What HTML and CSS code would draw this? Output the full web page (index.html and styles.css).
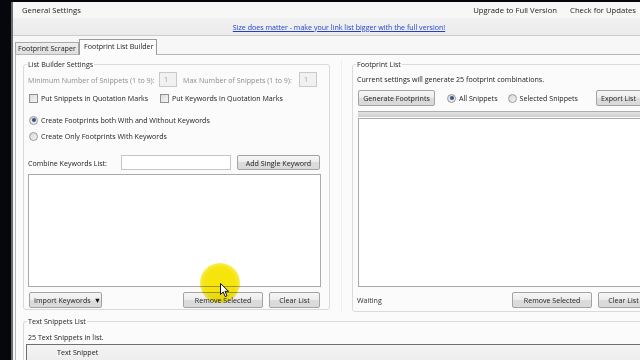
FILE: index.html
```html
<!DOCTYPE html>
<html>
<head>
<meta charset="utf-8">
<title>General Settings</title>
<link rel="stylesheet" href="styles.css">
</head>
<body>
<div class="window">
  <div class="menubar">
    <span class="menu-item">General Settings</span>
    <span class="spacer"></span>
    <span class="menu-item">Upgrade to Full Version</span>
    <span class="menu-item">Check for Updates</span>
  </div>
  <div class="banner"><a class="promo">Size does matter - make your link list bigger with the full version!</a></div>
  <div class="tabs">
    <div class="tab">Footprint Scraper</div>
    <div class="tab active">Footprint List Builder</div>
  </div>
  <div class="page">
    <div class="top">
      <fieldset class="group left">
        <legend>List Builder Settings</legend>
        <div class="row r1">
          <span class="dim lbl-min">Minimum Number of Snippets (1 to 9):</span>
          <span class="num">1</span>
          <span class="dim lbl-max">Max Number of Snippets (1 to 9):</span>
          <span class="num">1</span>
        </div>
        <div class="row r2">
          <label class="check first"><span class="box"></span>Put Snippets in Quotation Marks</label>
          <label class="check"><span class="box"></span>Put Keywords in Quotation Marks</label>
        </div>
        <div class="radios">
          <label class="radio"><span class="dot on"></span>Create Footprints both With and Without Keywords</label>
          <label class="radio"><span class="dot"></span>Create Only Footprints With Keywords</label>
        </div>
        <div class="row r5">
          <span class="lbl-combine">Combine Keywords List:</span>
          <span class="textbox"></span>
          <span class="btn w83">Add Single Keyword</span>
        </div>
        <div class="listbox"></div>
        <div class="row bottom">
          <span class="btn w73">Import Keywords <span class="tri">&#9660;</span></span>
          <span class="spacer"></span>
          <span class="btn w80">Remove Selected</span>
          <span class="btn w51">Clear List</span>
        </div>
      </fieldset>
      <div class="split"></div>
      <fieldset class="group right">
        <legend>Footprint List</legend>
        <div class="status">Current settings will generate 25 footprint combinations.</div>
        <div class="row gen">
          <span class="btn w77">Generate Footprints</span>
          <label class="radio inline"><span class="dot on"></span>All Snippets</label>
          <label class="radio inline"><span class="dot"></span>Selected Snippets</label>
          <span class="spacer"></span>
          <span class="btn w54">Export List <span class="tri">&#9660;</span></span>
        </div>
        <div class="strip"></div>
        <div class="listbox tall"></div>
        <div class="row bottom">
          <span class="waiting">Waiting</span>
          <span class="spacer"></span>
          <span class="btn w80">Remove Selected</span>
          <span class="btn w51">Clear List</span>
        </div>
      </fieldset>
    </div>
    <fieldset class="group snippets">
      <legend>Text Snippets List</legend>
      <div class="count">25 Text Snippets in list.</div>
      <div class="grid-header"><span class="col">Text Snippet</span></div>
    </fieldset>
  </div>
  <div class="highlight"></div>
  <svg class="cursor" width="11" height="15" viewBox="0 0 11 15">
    <path d="M0.5 0.5 L0.5 11.5 L3.2 9 L5.2 13.6 L7 12.8 L5 8.3 L8.6 8.3 Z" fill="#fff" stroke="#111" stroke-width="1" stroke-linejoin="round"/>
  </svg>
</div>
</body>
</html>
```

FILE: styles.css
```css
* { box-sizing: border-box; }
html, body { margin: 0; height: 100%; }
body {
  background: #06070d;
  padding: 2px 0 0 11px;
  overflow: hidden;
  font-family: "Open Sans", "Noto Sans", sans-serif;
  font-size: 7.1px;
  color: #222;
}
.window {
  position: relative;
  width: 654px;
  height: 360px;
  border-left: 2px solid #6d6d70;
  background: #f6f6f6;
}
.menubar {
  display: flex;
  align-items: center;
  height: 16px;
  padding: 0 29px 0 9px;
  background: #f7f7f7;
  font-size: 7.7px;
  color: #1c1c1c;
}
.spacer { flex: 1; }
.menu-item + .menu-item { margin-left: 13px; }
.banner {
  display: flex;
  justify-content: center;
  align-items: center;
  height: 18px;
  background: linear-gradient(#f1f1f1, #ebebeb);
  border-bottom: 1px solid #cdcdcd;
}
.promo {
  color: #1f3fcc;
  text-decoration: underline;
}
.tabs {
  display: flex;
  align-items: flex-end;
  height: 18px;
  padding-left: 2px;
  background: #f7f7f7;
}
.tab {
  height: 12px;
  width: 64px;
  border: 1px solid #a9a9a9;
  border-bottom: none;
  background: linear-gradient(#efefef, #dedede);
  line-height: 11px;
  padding-left: 2px;
  white-space: nowrap;
  overflow: hidden;
}
.tab.active {
  position: relative;
  z-index: 1;
  height: 16px;
  width: 78px;
  margin-bottom: -1px;
  background: #fcfcfc;
  border-color: #9b9b9b;
  line-height: 13px;
  padding-left: 4px;
}
.page {
  margin-left: 2px;
  height: 310px;
  border: 1px solid #b7b7b7;
  border-right: none;
  background: #fbfbfb;
  padding: 3px 0 0 7px;
}
.top {
  display: grid;
  grid-template-columns: 307px 22px 307px;
  align-items: start;
}
.split {
  align-self: stretch;
  margin: 2px 0 0 11px;
  width: 1px;
  background: #efefef;
}
.group {
  margin: 0;
  min-width: 0;
  border: 1px solid #dadada;
  border-radius: 3px;
  padding: 2px 8px 1px 4px;
}
.group legend {
  padding: 0 1px;
  margin-left: -1px;
  line-height: 12px;
  color: #262626;
}
.row {
  display: flex;
  align-items: center;
  white-space: nowrap;
}
.r1 { height: 15px; }
.dim { color: #8d8d8d; }
.lbl-min { width: 131px; }
.lbl-max { width: 116px; margin-left: 6px; }
.num {
  width: 18px;
  height: 15px;
  border: 1px solid #c9c9c9;
  background: #f1f1f1;
  color: #a0a0a0;
  padding-left: 4px;
  line-height: 13px;
}
.r2 { height: 12px; margin-top: 5px; }
.check, .radio {
  display: flex;
  align-items: center;
  height: 12px;
  white-space: nowrap;
}
.check.first { width: 131px; }
.box {
  width: 9px;
  height: 9px;
  margin: 0 3px 0 1px;
  border: 1px solid #8f9090;
  background: linear-gradient(135deg, #dcdcdc, #f6f6f6);
}
.radios {
  display: flex;
  flex-direction: column;
  gap: 4px;
  margin-top: 10px;
}
.dot {
  position: relative;
  width: 9px;
  height: 9px;
  margin: 0 3px 0 1px;
  border: 1px solid #9a9a9a;
  border-radius: 50%;
  background: linear-gradient(135deg, #d6d6d6, #f4f4f4);
}
.dot.on::after {
  content: "";
  position: absolute;
  left: 1.5px;
  top: 1.5px;
  width: 4px;
  height: 4px;
  border-radius: 50%;
  background: #2f5782;
}
.r5 { height: 15px; margin-top: 13px; }
.lbl-combine { width: 93px; }
.textbox {
  width: 110px;
  height: 15px;
  margin-right: 6px;
  border: 1px solid #c6c6c6;
  background: #fff;
}
.btn {
  display: flex;
  align-items: center;
  justify-content: center;
  height: 15px;
  border: 1px solid #a3a3a3;
  border-radius: 2px;
  background: linear-gradient(#f6f6f6, #ececec 50%, #dcdcdc 50%, #d9d9d9);
  color: #1e1e1e;
  white-space: nowrap;
}
.btn .tri { font-size: 7.5px; margin-left: 3px; color: #111; }
.w83 { width: 83px; }
.w73 { width: 73px; margin-left: 1px; justify-content: flex-start; padding-left: 4px; }
.w80 { width: 80px; }
.w51 { width: 51px; margin-left: 6px; margin-right: 1px; }
.w77 { width: 77px; margin-left: 1px; }
.w54 { width: 54px; justify-content: flex-start; padding-left: 4px; }
.listbox {
  height: 113px;
  margin-top: 4px;
  border: 1px solid #aaaaaa;
  background: #fff;
}
.bottom { height: 16px; margin-top: 5px; }
.bottom .btn { height: 16px; }
.right { padding-bottom: 3px; }
.status { height: 12px; line-height: 12px; margin-top: 1px; }
.gen { height: 16px; margin-top: 5px; }
.gen .btn { height: 16px; }
.radio.inline { margin-left: 11px; }
.radio.inline + .radio.inline { margin-left: 9px; }
.strip {
  height: 6px;
  margin: 5px 0 0 1px;
  border-top: 1px solid #aeaeae;
  background: linear-gradient(#e2e2e2, #cfcfcf);
}
.listbox.tall { height: 169px; margin: 1px 0 0 1px; }
.waiting { color: #303030; }
.snippets {
  margin-top: 3px;
  border-bottom: none;
  border-radius: 3px 3px 0 0;
  padding-bottom: 0;
}
.count { height: 12px; line-height: 12px; margin-top: 2px; }
.grid-header {
  height: 20px;
  margin: 1px 0 0 -2px;
  border-top: 1px solid #6f6f6f;
  border-left: 1px solid #6f6f6f;
  background: linear-gradient(#f4f4f4, #ececec);
  padding-left: 30px;
  line-height: 14px;
}
.highlight {
  position: absolute;
  left: 187px;
  top: 261px;
  width: 40px;
  height: 40px;
  border-radius: 50%;
  background: radial-gradient(circle, rgba(245,228,0,0.95) 55%, rgba(245,228,0,0.6) 75%, rgba(245,228,0,0) 100%);
  mix-blend-mode: multiply;
}
.cursor {
  position: absolute;
  left: 207px;
  top: 281px;
}
```
